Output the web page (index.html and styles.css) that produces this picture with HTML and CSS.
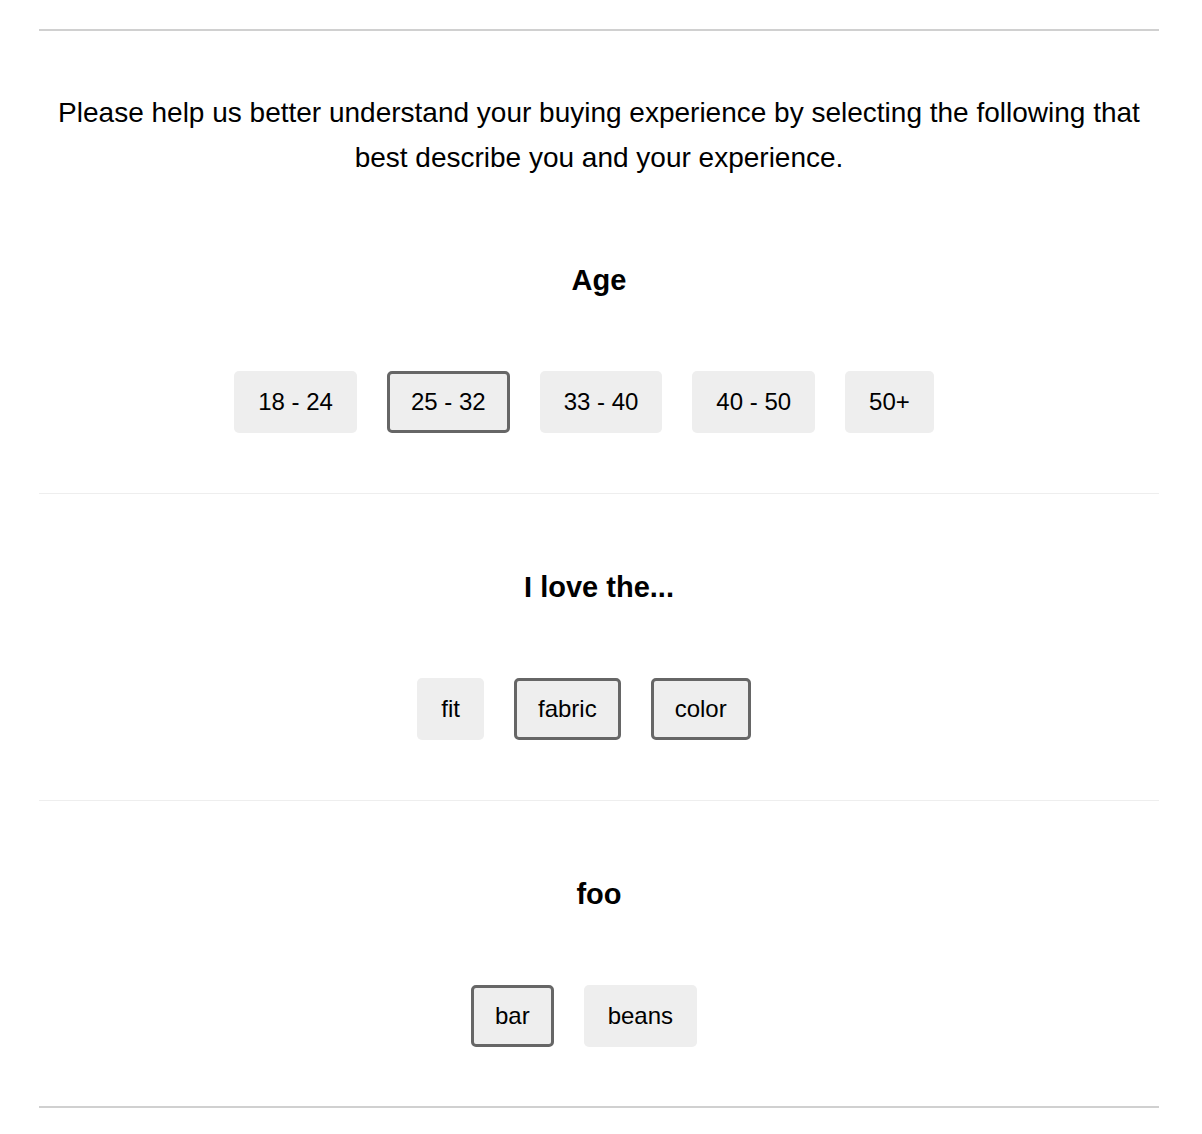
FILE: index.html
```html
<!DOCTYPE HTML>
<html>
    <head>
        <meta charset="UTF-8">
        <title>Survey</title>
        <link rel="stylesheet" href="styles.css">
    </head>
    <body>
        <div class="survey">
            <p class="intro">Please help us better understand your buying experience by selecting the following that best describe you and your experience.</p>

            <div class="question">
                <h2>Age</h2>
                <div class="options">
                    <button class="option">18 - 24</button>
                    <button class="option selected">25 - 32</button>
                    <button class="option">33 - 40</button>
                    <button class="option">40 - 50</button>
                    <button class="option">50+</button>
                </div>
            </div>

            <div class="question">
                <h2>I love the...</h2>
                <div class="options">
                    <button class="option">fit</button>
                    <button class="option selected">fabric</button>
                    <button class="option selected">color</button>
                </div>
            </div>

            <div class="question">
                <h2>foo</h2>
                <div class="options">
                    <button class="option selected">bar</button>
                    <button class="option">beans</button>
                </div>
            </div>
        </div>
    </body>
</html>
```

FILE: styles.css
```css
body{
    margin: 0;
    padding: 29px 43px 0 39px;
    font-family: "Liberation Sans", Arial, sans-serif;
    color: #000;
    background: #fff;
}
.survey{
    border-top: 2px solid #d0d0d0;
    border-bottom: 2px solid #d0d0d0;
    text-align: center;
}
.intro{
    margin: 0;
    padding: 59px 0 7px;
    font-size: 28px;
    line-height: 45px;
}
.question{
    padding: 76px 0 60px;
    border-bottom: 1px solid #eee;
}
.question:last-child{
    padding-bottom: 59px;
    border-bottom: 0;
}
.question h2{
    margin: 0 0 74px;
    font-size: 29px;
    line-height: 34px;
}
.options{
    display: flex;
    justify-content: center;
}
.option{
    margin: 0 30px 0 0;
    padding: 0 21px;
    height: 62px;
    border: 3px solid transparent;
    border-radius: 5px;
    background: #eee;
    font-family: inherit;
    font-size: 24px;
    color: #000;
    cursor: pointer;
}
.option.selected{
    border-color: #666;
}
```
